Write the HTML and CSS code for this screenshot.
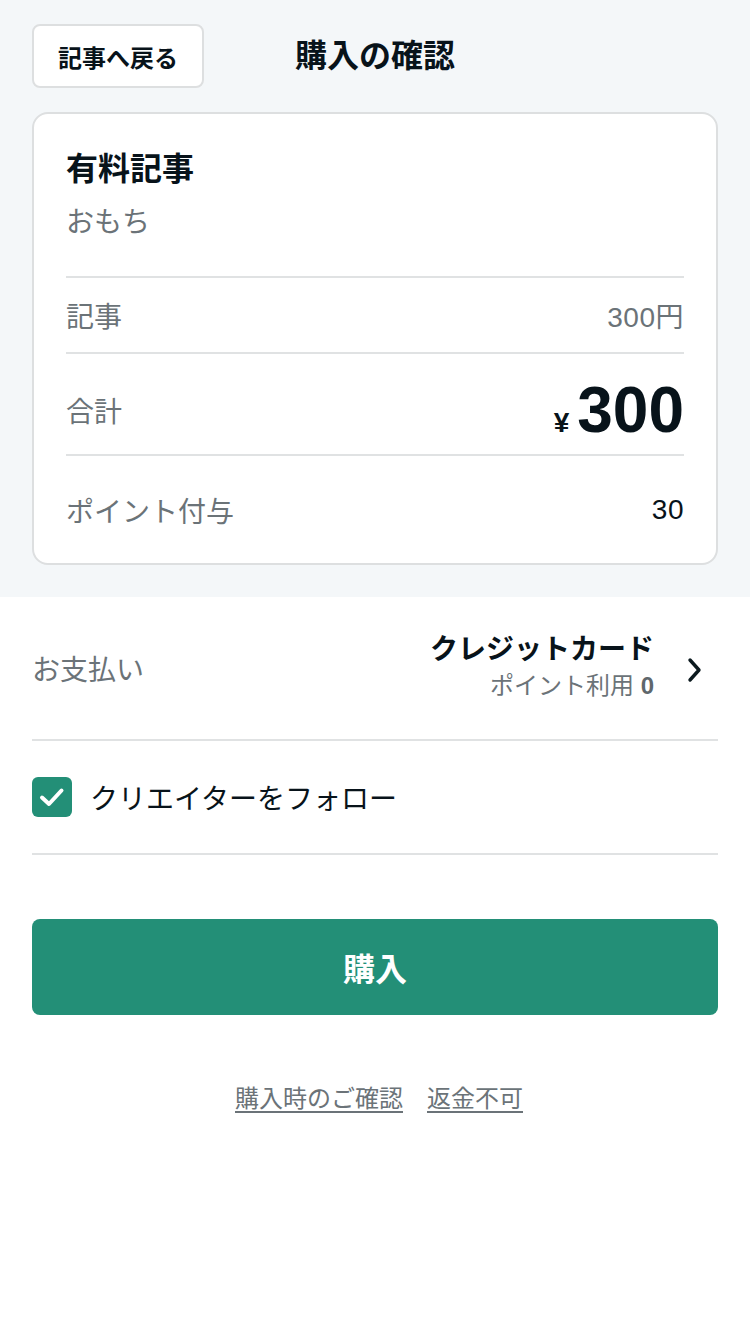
FILE: index.html
```html
<!DOCTYPE html>
<html lang="ja">
<head>
<meta charset="utf-8">
<title>購入の確認</title>
<link rel="stylesheet" href="styles.css">
</head>
<body>
<div class="top">
  <header class="header">
    <button class="back">記事へ戻る</button>
    <h1 class="title">購入の確認</h1>
  </header>
  <section class="card">
    <div class="card-head">
      <div class="card-title">有料記事</div>
      <div class="card-author">おもち</div>
    </div>
    <div class="row row-item">
      <span class="label">記事</span>
      <span class="value">300円</span>
    </div>
    <div class="row row-total">
      <span class="label">合計</span>
      <span class="total"><span class="yen">¥</span>300</span>
    </div>
    <div class="row row-point">
      <span class="label">ポイント付与</span>
      <span class="value dark">30</span>
    </div>
  </section>
</div>
<div class="bottom">
  <div class="pay">
    <span class="pay-label">お支払い</span>
    <div class="pay-right">
      <div class="pay-method">
        <div class="pay-name">クレジットカード</div>
        <div class="pay-point">ポイント利用 <b>0</b></div>
      </div>
      <svg class="chev" width="18" height="26" viewBox="0 0 18 26"><path d="M4 3 L13 13 L4 23" fill="none" stroke="#0c1a1f" stroke-width="3.4" stroke-linecap="round" stroke-linejoin="round"/></svg>
    </div>
  </div>
  <label class="follow">
    <span class="check"><svg width="40" height="40" viewBox="0 0 40 40"><path d="M10 20.5 L17 27 L29.5 13.5" fill="none" stroke="#fff" stroke-width="4" stroke-linecap="round" stroke-linejoin="round"/></svg></span>
    <span class="follow-text">クリエイターをフォロー</span>
  </label>
  <button class="buy">購入</button>
  <div class="links">
    <a href="#">購入時のご確認</a>
    <a href="#">返金不可</a>
  </div>
</div>
</body>
</html>
```

FILE: styles.css
```css
* { box-sizing: border-box; }
html, body { margin: 0; padding: 0; }
body {
  width: 750px;
  min-height: 1334px;
  background: #fff;
  font-family: "Liberation Sans", "Noto Sans CJK JP", sans-serif;
  color: #08131a;
}
.top {
  background: #f4f7f9;
  padding: 24px 32px 32px;
}
.header {
  position: relative;
  height: 64px;
  display: flex;
  align-items: center;
  justify-content: center;
}
.back {
  position: absolute;
  left: 0;
  top: 0;
  width: 172px;
  height: 64px;
  background: #fff;
  border: 2px solid #dddfe0;
  border-radius: 8px;
  font-family: inherit;
  font-size: 24px;
  font-weight: 700;
  color: #08131a;
  padding: 0;
}
.title {
  margin: 0;
  font-size: 32px;
  font-weight: 700;
  line-height: 1;
}
.card {
  margin-top: 24px;
  background: #fff;
  border: 2px solid #dddfe0;
  border-radius: 16px;
  padding: 0 32px;
}
.card-head {
  padding: 35px 0 33px;
  border-bottom: 2px solid #e0e2e3;
}
.card-title {
  font-size: 32px;
  font-weight: 700;
  line-height: 40px;
}
.card-author {
  margin-top: 14px;
  font-size: 28px;
  line-height: 40px;
  color: #6b7378;
}
.row {
  display: flex;
  justify-content: space-between;
  align-items: center;
}
.row-item { height: 76px; border-bottom: 2px solid #e0e2e3; }
.row-total { height: 102px; padding-top: 12px; border-bottom: 2px solid #e0e2e3; }
.row-point { height: 107px; }
.label { font-size: 28px; color: #6b7378; }
.value { font-size: 28px; color: #6b7378; letter-spacing: 0.5px; }
.value.dark { color: #08131a; }
.total {
  font-size: 64px;
  font-weight: 700;
  line-height: 1;
  color: #08131a;
}
.yen { font-size: 28px; margin-right: 8px; }
.bottom { padding: 0 32px; }
.pay {
  display: flex;
  justify-content: space-between;
  align-items: center;
  height: 144px;
  border-bottom: 2px solid #e0e2e3;
}
.pay-label { font-size: 28px; color: #6b7378; }
.pay-right { display: flex; align-items: center; }
.pay-method { text-align: right; }
.pay-name { font-size: 28px; font-weight: 700; line-height: 36px; }
.pay-point { font-size: 24px; color: #6b7378; line-height: 36px; margin-top: 0; }
.pay-point b { color: #5f676c; }
.chev { margin-left: 32px; margin-right: 14px; margin-top: 4px; }
.follow {
  display: flex;
  align-items: center;
  height: 114px;
  border-bottom: 2px solid #e0e2e3;
}
.check {
  width: 40px;
  height: 40px;
  background: #238f77;
  border-radius: 6px;
  display: flex;
  align-items: center;
  justify-content: center;
}
.follow-text { font-size: 28px; margin-left: 18px; color: #08131a; }
.buy {
  display: block;
  width: 100%;
  height: 96px;
  margin-top: 64px;
  background: #238f77;
  border: none;
  border-radius: 8px;
  color: #fff;
  font-family: inherit;
  font-size: 32px;
  font-weight: 700;
}
.links {
  margin-top: 64px;
  padding-left: 8px;
  display: flex;
  justify-content: center;
  gap: 24px;
}
.links a {
  font-size: 24px;
  color: #6b7378;
  text-decoration: underline;
  text-underline-offset: 4px;
}
```
